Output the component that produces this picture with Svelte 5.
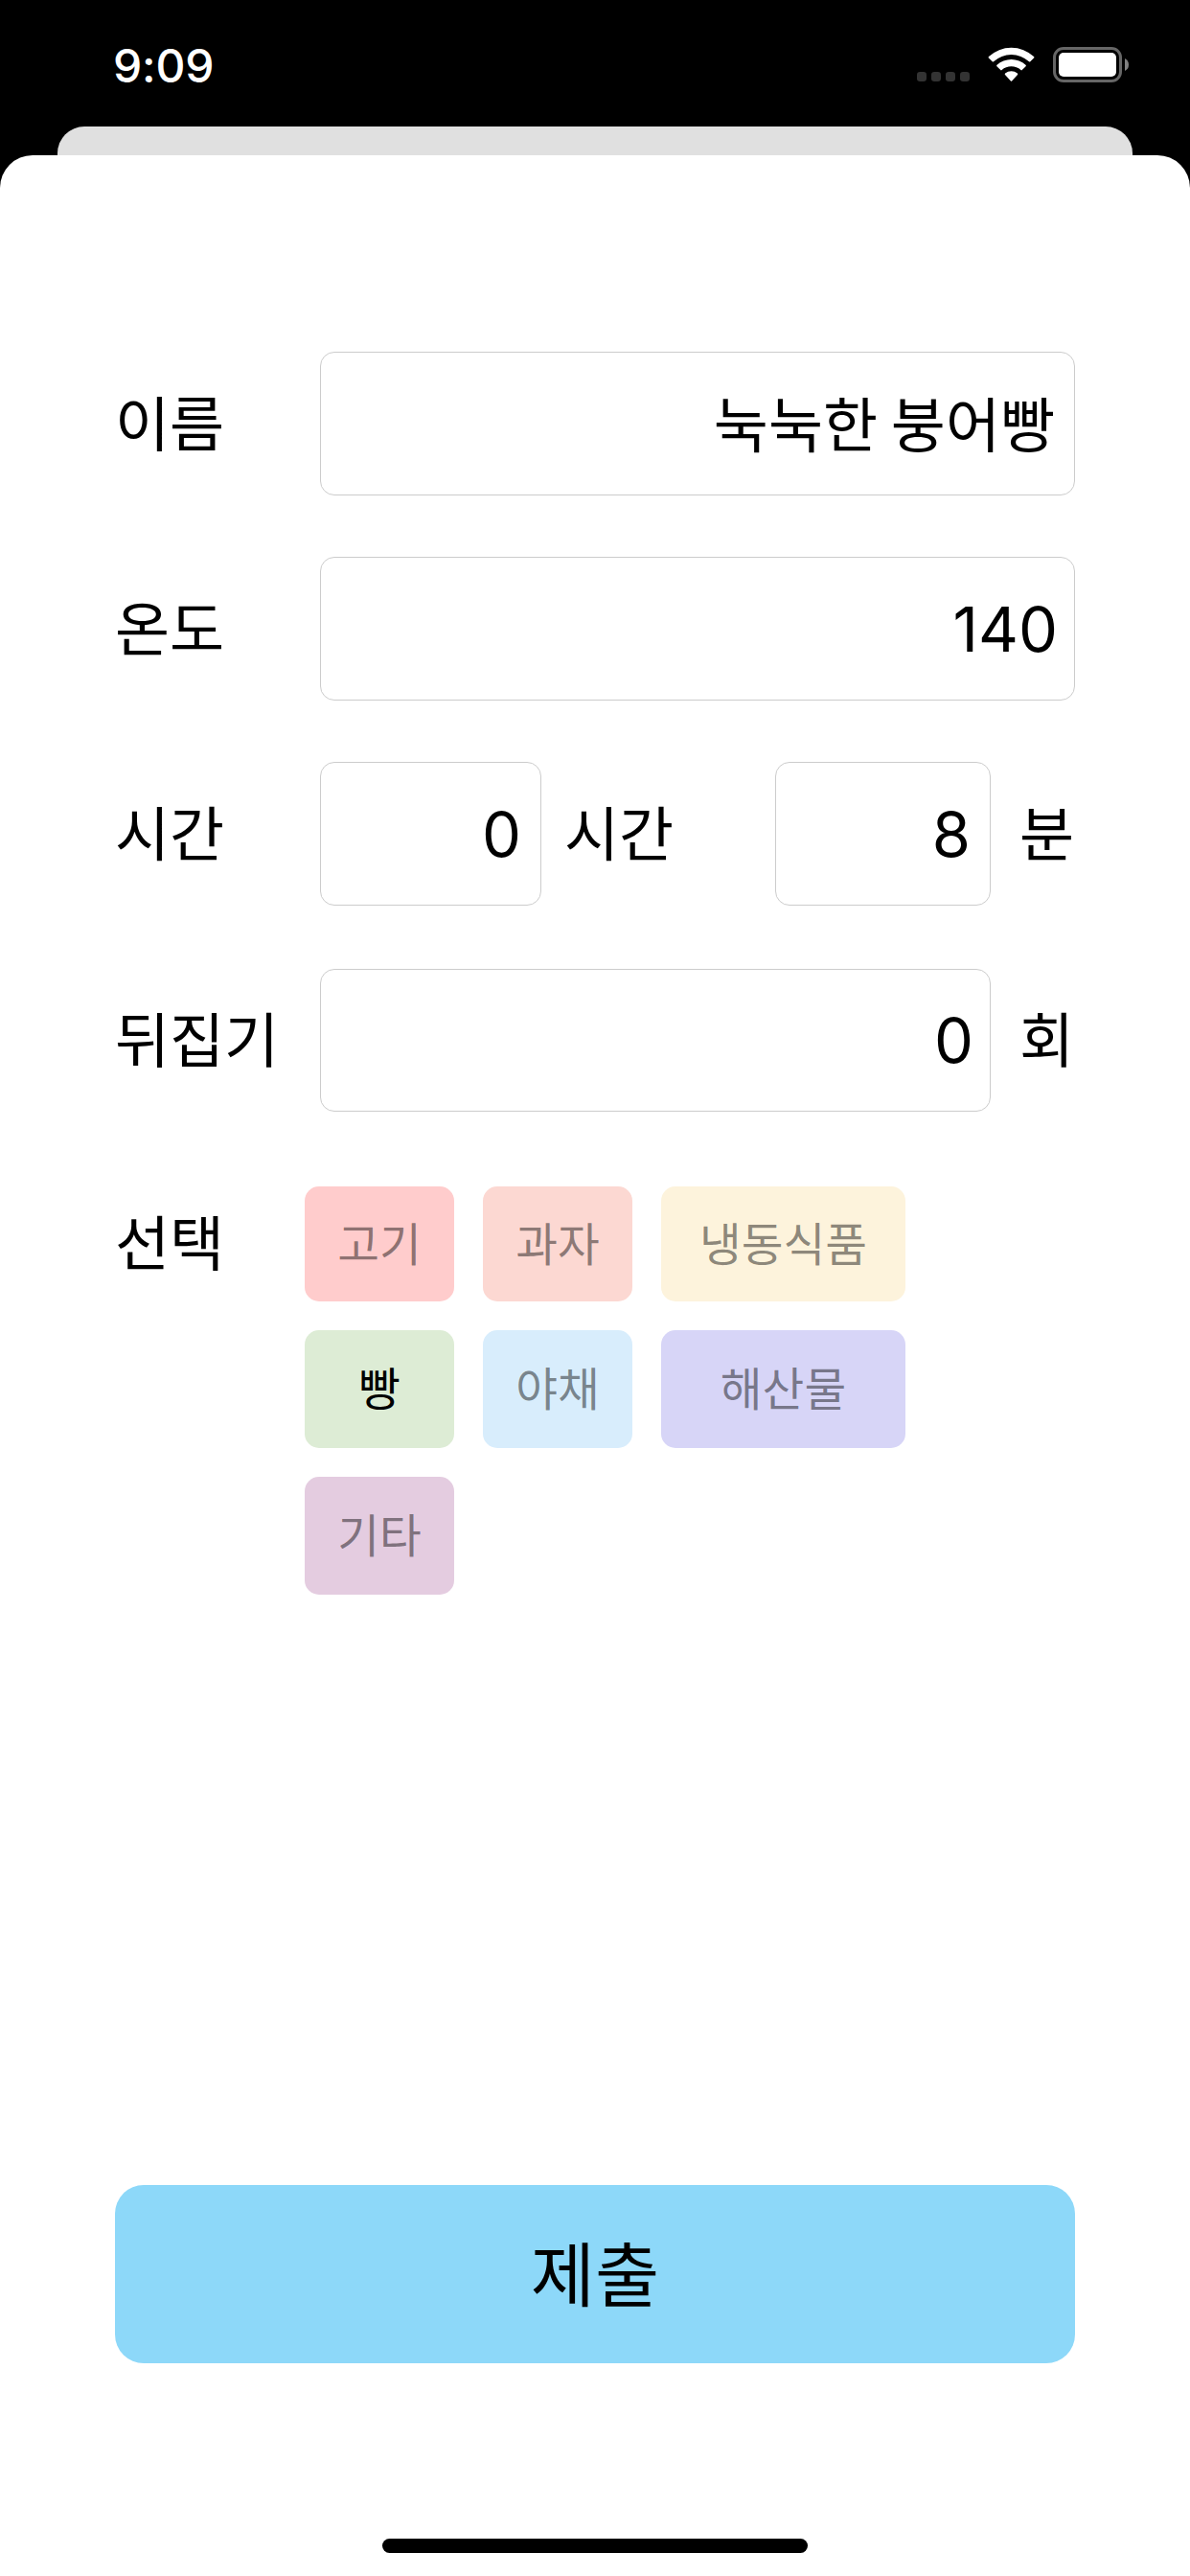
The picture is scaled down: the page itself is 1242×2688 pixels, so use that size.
<script>
  let name = $state('눅눅한 붕어빵');
  let temperature = $state('140');
  let hours = $state('0');
  let minutes = $state('8');
  let flips = $state('0');
  let selected = $state('bread');

  const categories = [
    { id: 'meat', label: '고기' },
    { id: 'snack', label: '과자' },
    { id: 'frozen', label: '냉동식품' },
    { id: 'bread', label: '빵' },
    { id: 'vegetable', label: '야채' },
    { id: 'seafood', label: '해산물' },
    { id: 'etc', label: '기타' }
  ];
</script>

<div class="screen">
  <header class="status">
    <span class="clock">9:09</span>
    <svg class="indicators" width="222" height="40" viewBox="956 48 222 40" aria-hidden="true">
      <g fill="#333">
        <rect x="957" y="75" width="10" height="10" rx="3.2" />
        <rect x="972" y="75" width="10" height="10" rx="3.2" />
        <rect x="987" y="75" width="10" height="10" rx="3.2" />
        <rect x="1002" y="75" width="10" height="10" rx="3.2" />
      </g>
      <g fill="#fff">
        <path d="M1031.9 60.6Q1031.2 59.8 1032 59.1A34.5 34.5 0 0 1 1079 59.1Q1079.8 59.8 1079.1 60.6L1075.3 64.3Q1074.7 64.9 1074 64.3A27.2 27.2 0 0 0 1037 64.3Q1036.3 64.9 1035.7 64.3Z" />
        <path d="M1040.4 69.2Q1039.7 68.5 1040.5 67.8A22.3 22.3 0 0 1 1070.5 67.8Q1071.3 68.5 1070.6 69.2L1066.7 73.1Q1066.1 73.7 1065.4 73.1A15 15 0 0 0 1045.6 73.1Q1044.9 73.7 1044.3 73.1Z" />
        <path d="M1049 77.9Q1048.3 77.2 1049.1 76.5A10.3 10.3 0 0 1 1061.9 76.5Q1062.7 77.2 1062 77.9L1056.1 84.4Q1055.5 85 1054.9 84.4Z" />
        <rect x="1105" y="55" width="60" height="25" rx="5" />
      </g>
      <rect x="1100.5" y="50.5" width="69" height="34" rx="9.5" fill="none" stroke="#666" stroke-width="3" />
      <path d="M1174 61Q1178 63 1178 67.5T1174 74Z" fill="#808080" />
    </svg>
  </header>

  <div class="behind"></div>

  <main class="sheet">
    <form class="form" onsubmit={(e) => e.preventDefault()}>
      <div class="row">
        <label for="name">이름</label>
        <input id="name" class="grow hangul" bind:value={name} />
      </div>
      <div class="row">
        <label for="temperature">온도</label>
        <input id="temperature" class="grow" bind:value={temperature} />
      </div>
      <div class="row">
        <label for="hours">시간</label>
        <input id="hours" class="hours" bind:value={hours} />
        <span class="hour-unit">시간</span>
        <input class="minutes" aria-label="분" bind:value={minutes} />
        <span class="unit">분</span>
      </div>
      <div class="row last">
        <label for="flips">뒤집기</label>
        <input id="flips" class="grow" bind:value={flips} />
        <span class="unit">회</span>
      </div>

      <div class="select">
        <span class="select-label">선택</span>
        <div class="chips">
          {#each categories as category}
            <button
              type="button"
              class="chip {category.id}"
              class:active={selected === category.id}
              onclick={() => (selected = category.id)}
            >
              {category.label}
            </button>
          {/each}
        </div>
      </div>

      <button type="submit" class="submit">제출</button>
    </form>
    <div class="home"></div>
  </main>
</div>

<style>
  :global(body) {
    margin: 0;
    background: #000;
  }

  .screen {
    box-sizing: border-box;
    display: flex;
    flex-direction: column;
    width: 1242px;
    height: 2688px;
    overflow: hidden;
    background: #000;
    color: #000;
    font-family: Inter, 'Noto Sans CJK KR', sans-serif;
  }

  .status {
    box-sizing: border-box;
    display: flex;
    justify-content: space-between;
    align-items: center;
    height: 132px;
    padding: 4px 64px 0 118px;
  }

  .clock {
    padding-top: 1px;
    color: #fff;
    font-size: 48px;
    font-weight: 500;
    line-height: 60px;
    letter-spacing: -0.2px;
  }

  .indicators {
    display: block;
  }

  .behind {
    flex: none;
    height: 30px;
    margin: 0 60px;
    border-radius: 28px 28px 0 0;
    background: #e0e0e0;
  }

  .sheet {
    box-sizing: border-box;
    display: flex;
    flex: 1;
    flex-direction: column;
    align-items: center;
    padding: 205px 120px 24px;
    border-radius: 34px 34px 0 0;
    background: #fff;
  }

  .form {
    display: flex;
    flex: 1;
    flex-direction: column;
    width: 1002px;
  }

  .row {
    display: flex;
    align-items: center;
    height: 150px;
    margin-bottom: 64px;
    font-size: 62px;
    line-height: 90px;
  }

  .row:nth-child(3) {
    margin-bottom: 66px;
  }

  .row.last {
    height: 149px;
    margin-bottom: 78px;
  }

  label {
    width: 214px;
    white-space: nowrap;
  }

  label,
  .hour-unit,
  .unit {
    padding-bottom: 7px;
  }

  label,
  .hour-unit,
  .unit,
  .select-label,
  .hangul {
    font-family: 'Noto Sans CJK KR', sans-serif;
  }

  input {
    box-sizing: border-box;
    min-width: 0;
    height: 100%;
    margin: 0;
    padding: 0 20px;
    border: 1px solid #ccc;
    border-radius: 15px;
    outline: none;
    background: #fff;
    color: #000;
    font-family: Inter, sans-serif;
    font-size: 65px;
    text-align: right;
  }

  .grow {
    flex: 1;
    padding-right: 17px;
  }

  input.hangul {
    padding: 0 20px 4px;
    font-family: 'Noto Sans CJK KR', sans-serif;
    font-size: 62px;
  }

  .hours {
    width: 231px;
  }

  .minutes {
    width: 225px;
  }

  .hour-unit {
    width: 220px;
    padding-left: 24px;
  }

  .unit {
    width: 58px;
    padding-left: 30px;
  }

  .select {
    display: flex;
    align-items: flex-start;
  }

  .select-label {
    width: 198px;
    font-size: 62px;
    line-height: 113px;
  }

  .chips {
    display: grid;
    grid-template-columns: 156px 156px 255px;
    grid-template-rows: 120px 123px 123px;
    gap: 30px;
  }

  .chip {
    margin: 0;
    padding: 0 0 5px;
    border: 0;
    border-radius: 15px;
    color: rgba(0, 0, 0, 0.45);
    font-family: 'Noto Sans CJK KR', sans-serif;
    font-size: 47.6px;
    line-height: 70px;
    white-space: nowrap;
  }

  .chip.active {
    color: #000;
  }

  .meat {
    background: #ffcccc;
  }

  .snack {
    background: #fcd8d2;
  }

  .frozen {
    background: #fdf3dc;
  }

  .bread {
    background: #ddecd5;
  }

  .vegetable {
    background: #d8edfc;
  }

  .seafood {
    background: #d7d5f7;
  }

  .etc {
    background: #e4cce0;
  }

  .submit {
    height: 186px;
    margin: auto 0 183px;
    padding: 0 0 9px;
    border: 0;
    border-radius: 30px;
    background: #8dd8f9;
    color: #000;
    font-family: 'Noto Sans CJK KR', sans-serif;
    font-size: 73px;
    line-height: 106px;
  }

  .home {
    width: 444px;
    height: 15px;
    border-radius: 8px;
    background: #000;
  }
</style>
